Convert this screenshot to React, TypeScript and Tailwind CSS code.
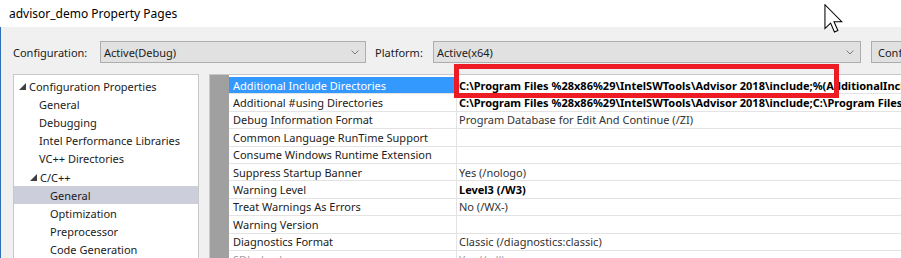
import React from "react";

type Row = { name: string; value: string; bold?: boolean; selected?: boolean; faded?: boolean };

const rows: Row[] = [
  {
    name: "Additional Include Directories",
    value: "C:\\Program Files %28x86%29\\IntelSWTools\\Advisor 2018\\include;%(AdditionalIncludeDirectories)",
    bold: true,
    selected: true,
  },
  {
    name: "Additional #using Directories",
    value: "C:\\Program Files %28x86%29\\IntelSWTools\\Advisor 2018\\include;C:\\Program Files %28x86%29",
    bold: true,
  },
  { name: "Debug Information Format", value: "Program Database for Edit And Continue (/ZI)" },
  { name: "Common Language RunTime Support", value: "" },
  { name: "Consume Windows Runtime Extension", value: "" },
  { name: "Suppress Startup Banner", value: "Yes (/nologo)" },
  { name: "Warning Level", value: "Level3 (/W3)", bold: true },
  { name: "Treat Warnings As Errors", value: "No (/WX-)" },
  { name: "Warning Version", value: "" },
  { name: "Diagnostics Format", value: "Classic (/diagnostics:classic)" },
  { name: "SDL checks", value: "Yes (/sdl)", faded: true },
];

type Node = { label: string; level: number; open?: boolean; selected?: boolean };

const tree: Node[] = [
  { label: "Configuration Properties", level: 0, open: true },
  { label: "General", level: 1 },
  { label: "Debugging", level: 1 },
  { label: "Intel Performance Libraries", level: 1 },
  { label: "VC++ Directories", level: 1 },
  { label: "C/C++", level: 1, open: true },
  { label: "General", level: 2, selected: true },
  { label: "Optimization", level: 2 },
  { label: "Preprocessor", level: 2 },
  { label: "Code Generation", level: 2 },
];

const Chevron = () => (
  <svg width="8" height="5" viewBox="0 0 8 5" className="shrink-0">
    <path d="M0.5 0.5 L4 4 L7.5 0.5" fill="none" stroke="#7a7a7a" strokeWidth="1" />
  </svg>
);

const Triangle = () => (
  <svg width="7" height="7" viewBox="0 0 7 7" className="shrink-0">
    <path d="M7 0 L7 7 L0 7 Z" fill="#404040" />
  </svg>
);

const Select = ({ value, width }: { value: string; width: string }) => (
  <div
    className={`${width} shrink-0 h-[22px] flex items-center justify-between pl-[3px] pr-[6px] bg-[#e1e1e1] border border-[#adadad]`}
  >
    <span>{value}</span>
    <Chevron />
  </div>
);

export default function App() {
  return (
    <div className="relative w-[901px] h-[258px] overflow-hidden bg-white text-[11px] leading-none text-[#1b1b1b] font-['Noto_Sans',sans-serif]">
      {/* Title bar */}
      <div className="h-[27px] flex items-center pl-[9px] text-[12px] text-black">advisor_demo Property Pages</div>

      {/* Body */}
      <div className="h-[231px] bg-[#f0f0f0] border-l border-[#2f6fb5] flex flex-col">
        {/* Configuration / platform row */}
        <div className="flex items-center mt-[14px] pl-[12px] whitespace-nowrap">
          <span className="w-[87px] shrink-0">Configuration:</span>
          <Select value="Active(Debug)" width="w-[266px]" />
          <span className="ml-[9px] w-[58px] shrink-0">Platform:</span>
          <Select value="Active(x64)" width="w-[428px]" />
          <div className="ml-[10px] h-[22px] w-[60px] shrink-0 overflow-hidden flex items-center pl-[6px] bg-[#e1e1e1] border border-[#adadad]">
            Configuration Manager...
          </div>
        </div>

        {/* Panels */}
        <div className="flex mt-[11px] pl-[12px] flex-1 min-h-0">
          {/* Tree */}
          <div className="w-[186px] shrink-0 bg-white border border-[#c8c8c8] border-b-0 pt-[2px]">
            {tree.map((n, i) => (
              <div
                key={i}
                className={`h-[18.2px] flex items-center whitespace-nowrap ${n.selected ? "bg-[#cccedb]" : ""}`}
                style={{ paddingLeft: n.level === 0 ? 5 : n.level === 1 && !n.open ? 25 : n.level === 1 ? 16 : 36 }}
              >
                {n.open && (
                  <span className="mr-[3px] flex items-center">
                    <Triangle />
                  </span>
                )}
                <span>{n.label}</span>
              </div>
            ))}
          </div>

          {/* Property grid */}
          <div className="ml-[10px] flex-1 min-w-0 flex bg-white border-t border-l border-[#c8c8c8]">
            <div className="w-[19px] shrink-0 bg-[#a0a0a0]" />
            <div className="flex-1 min-w-0 pt-[2px]">
              {rows.map((r, i) => (
                <div key={i} className="h-[17.4px] flex border-b border-[#e3e3e3] whitespace-nowrap">
                  <div
                    className={`w-[228px] shrink-0 flex items-center pl-[4px] border-r border-[#e3e3e3] ${
                      r.selected ? "bg-[#3399ff] text-white" : r.faded ? "text-[#a0a0a0]" : ""
                    }`}
                  >
                    {r.name}
                  </div>
                  <div
                    className={`flex-1 min-w-0 overflow-hidden flex items-center pl-[2px] ${
                      r.bold ? "font-bold text-black" : r.faded ? "text-[#a0a0a0]" : "text-[#333333]"
                    }`}
                  >
                    {r.value}
                  </div>
                </div>
              ))}
            </div>
          </div>
        </div>
      </div>

      {/* Red highlight box */}
      <div className="absolute left-[454px] top-[64px] w-[385px] h-[34px] border-[5px] border-[#ed1c24]" />

      {/* Mouse cursor */}
      <svg className="absolute left-[824px] top-[4px]" width="19" height="29" viewBox="0 0 12.5 19.5">
        <path
          d="M0.5 0.5 V16.5 L4.3 12.8 L6.9 18.8 L9.2 17.8 L6.6 11.9 H11.8 Z"
          fill="white"
          stroke="black"
          strokeWidth="0.7"
          strokeLinejoin="miter"
        />
      </svg>
    </div>
  );
}
